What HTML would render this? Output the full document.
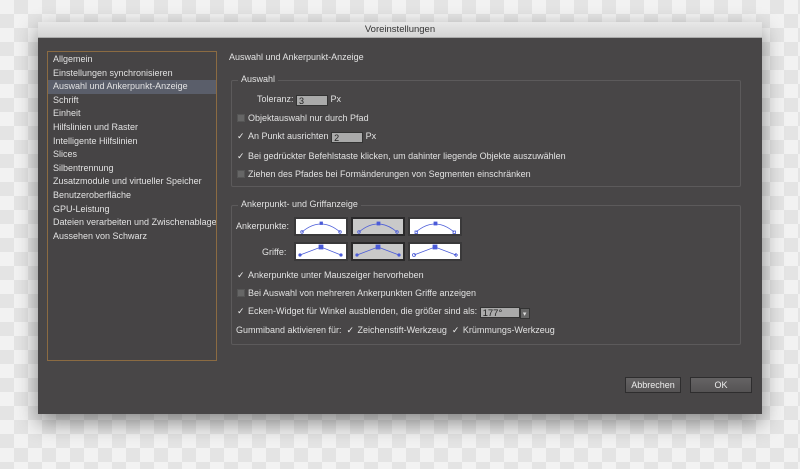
<!DOCTYPE html><html><head><style>
*{margin:0;padding:0;box-sizing:border-box}
body{width:800px;height:469px;overflow:hidden;position:relative;font-family:"Liberation Sans",sans-serif;font-size:9px;color:#e2e2e2;
background-color:#f2f2f2;background-image:linear-gradient(45deg,#e4e4e4 25%,transparent 25%,transparent 75%,#e4e4e4 75%),linear-gradient(45deg,#e4e4e4 25%,transparent 25%,transparent 75%,#e4e4e4 75%);background-size:28px 28px;background-position:0 0,14px 14px}
.dlg{position:absolute;left:38px;top:22px;width:724px;height:392px;background:#484647;box-shadow:0 8px 20px rgba(0,0,0,.45)}
.tb{height:16px;background:linear-gradient(#e8e8e8,#d4d4d4);color:#333;text-align:center;font-size:9.5px;line-height:16px;border-bottom:1px solid #aaa}
.a{position:absolute;white-space:nowrap}
.side{position:absolute;left:9px;top:29px;width:170px;height:310px;border:1px solid #8b6b42;background:#464445;overflow:hidden}
.side div{height:13.6px;line-height:13.6px;padding-left:5px;white-space:nowrap}
.sel{background:#5a5e6a}
.grp{position:absolute;border:1px solid #5c5a5b;border-radius:2px}
.leg{position:absolute;top:-7px;left:6px;background:#484647;padding:0 3px}
.cb{display:inline-block;width:8px;height:8px;background:#666;border:1px solid #555;vertical-align:-1px;margin-right:3px;position:relative}
.ck{display:inline-block;width:8px;margin-right:3px;font-size:9px;color:#eee}
.inp{display:inline-block;background:#aaa;color:#222;height:11px;line-height:11px;padding-left:2px;border:1px solid #333;vertical-align:-2px}
.btn{position:absolute;height:16px;border:1px solid #2e2d2e;background:linear-gradient(#656364,#555354);color:#eee;text-align:center;line-height:14px;font-size:9px}
</style></head><body>
<div class="dlg">
<div class="tb">Voreinstellungen</div>
<div class="side">
<div style="margin-top:1px">Allgemein</div><div>Einstellungen synchronisieren</div><div class="sel">Auswahl und Ankerpunkt-Anzeige</div><div>Schrift</div><div>Einheit</div><div>Hilfslinien und Raster</div><div>Intelligente Hilfslinien</div><div>Slices</div><div>Silbentrennung</div><div>Zusatzmodule und virtueller Speicher</div><div>Benutzeroberfläche</div><div>GPU-Leistung</div><div>Dateien verarbeiten und Zwischenablage</div><div>Aussehen von Schwarz</div>
</div>
<div class="a" style="left:191px;top:30px">Auswahl und Ankerpunkt-Anzeige</div>
<div class="grp" style="left:193px;top:58px;width:510px;height:107px"><span class="leg">Auswahl</span></div>
<div class="a" style="left:219px;top:72px">Toleranz: <span class="inp" style="width:32px">3</span> Px</div>
<div class="a" style="left:199px;top:91px"><span class="cb"></span>Objektauswahl nur durch Pfad</div>
<div class="a" style="left:199px;top:109px"><span class="ck">✓</span>An Punkt ausrichten <span class="inp" style="width:32px">2</span> Px</div>
<div class="a" style="left:199px;top:129px"><span class="ck">✓</span>Bei gedrückter Befehlstaste klicken, um dahinter liegende Objekte auszuwählen</div>
<div class="a" style="left:199px;top:147px"><span class="cb"></span>Ziehen des Pfades bei Formänderungen von Segmenten einschränken</div>
<div class="grp" style="left:193px;top:183px;width:510px;height:140px"><span class="leg">Ankerpunkt- und Griffanzeige</span></div>
<div class="a" style="left:198px;top:199px">Ankerpunkte:</div>
<div class="a" style="left:224px;top:225px">Griffe:</div>
<svg class="a" style="left:0;top:0" width="724" height="392">
<g fill="none" stroke="#4a5bd8" stroke-width="0.8">
<rect x="257" y="196" width="52" height="17" fill="#fff" stroke="#3a393a" stroke-width="2"/>
<rect x="314" y="196" width="52" height="17" fill="#c9c9c9" stroke="#2a292a" stroke-width="2"/>
<rect x="371" y="196" width="52" height="17" fill="#fff" stroke="#3a393a" stroke-width="2"/>
<rect x="257" y="221" width="52" height="17" fill="#fff" stroke="#3a393a" stroke-width="2"/>
<rect x="314" y="221" width="52" height="17" fill="#c9c9c9" stroke="#2a292a" stroke-width="2"/>
<rect x="371" y="221" width="52" height="17" fill="#fff" stroke="#3a393a" stroke-width="2"/>
<path d="M264 210 Q283 194 302 210"/><path d="M321 210 Q340 194 359 210"/><path d="M378 210 Q397 194 416 210"/>
<circle cx="264" cy="210" r="1.3"/><circle cx="302" cy="210" r="1.3"/><rect x="282" y="200" width="2.5" height="2.5" fill="#4a5bd8"/>
<circle cx="321" cy="210" r="1.3"/><circle cx="359" cy="210" r="1.3"/><rect x="339" y="200" width="3" height="3" fill="#4a5bd8"/>
<rect x="377" y="209" width="2.5" height="2.5"/><rect x="415" y="209" width="2.5" height="2.5"/><rect x="396" y="200" width="3" height="3" fill="#4a5bd8"/>
<path d="M262 233 L283 225 L303 233"/><path d="M319 233 L340 225 L361 233"/><path d="M376 233 L397 225 L418 233"/>
<circle cx="262" cy="233" r="1.2" fill="#4a5bd8"/><circle cx="303" cy="233" r="1.2" fill="#4a5bd8"/><rect x="281" y="223" width="4" height="4" fill="#4a5bd8"/>
<circle cx="319" cy="233" r="1.2" fill="#4a5bd8"/><circle cx="361" cy="233" r="1.2" fill="#4a5bd8"/><rect x="338" y="223" width="4" height="4" fill="#4a5bd8"/>
<circle cx="376" cy="233" r="1.5"/><path d="M418 231.5 l1.5 1.5 -1.5 1.5 -1.5 -1.5z"/><rect x="395" y="223" width="4" height="4" fill="#4a5bd8"/>
</g></svg>
<div class="a" style="left:199px;top:248px"><span class="ck">✓</span>Ankerpunkte unter Mauszeiger hervorheben</div>
<div class="a" style="left:199px;top:266px"><span class="cb"></span>Bei Auswahl von mehreren Ankerpunkten Griffe anzeigen</div>
<div class="a" style="left:199px;top:284px"><span class="ck">✓</span>Ecken-Widget für Winkel ausblenden, die größer sind als: <span class="inp" style="width:40px;font-size:9.5px">177°</span><span class="inp" style="width:10px;background:#666;color:#ddd;font-size:7px;text-align:center;padding:0">▾</span></div>
<div class="a" style="left:198px;top:303px">Gummiband aktivieren für: &nbsp;<span class="ck">✓</span>Zeichenstift-Werkzeug &nbsp;<span class="ck">✓</span>Krümmungs-Werkzeug</div>
<div class="btn" style="left:587px;top:355px;width:56px">Abbrechen</div>
<div class="btn" style="left:652px;top:355px;width:62px">OK</div>
</div>
</body></html>
